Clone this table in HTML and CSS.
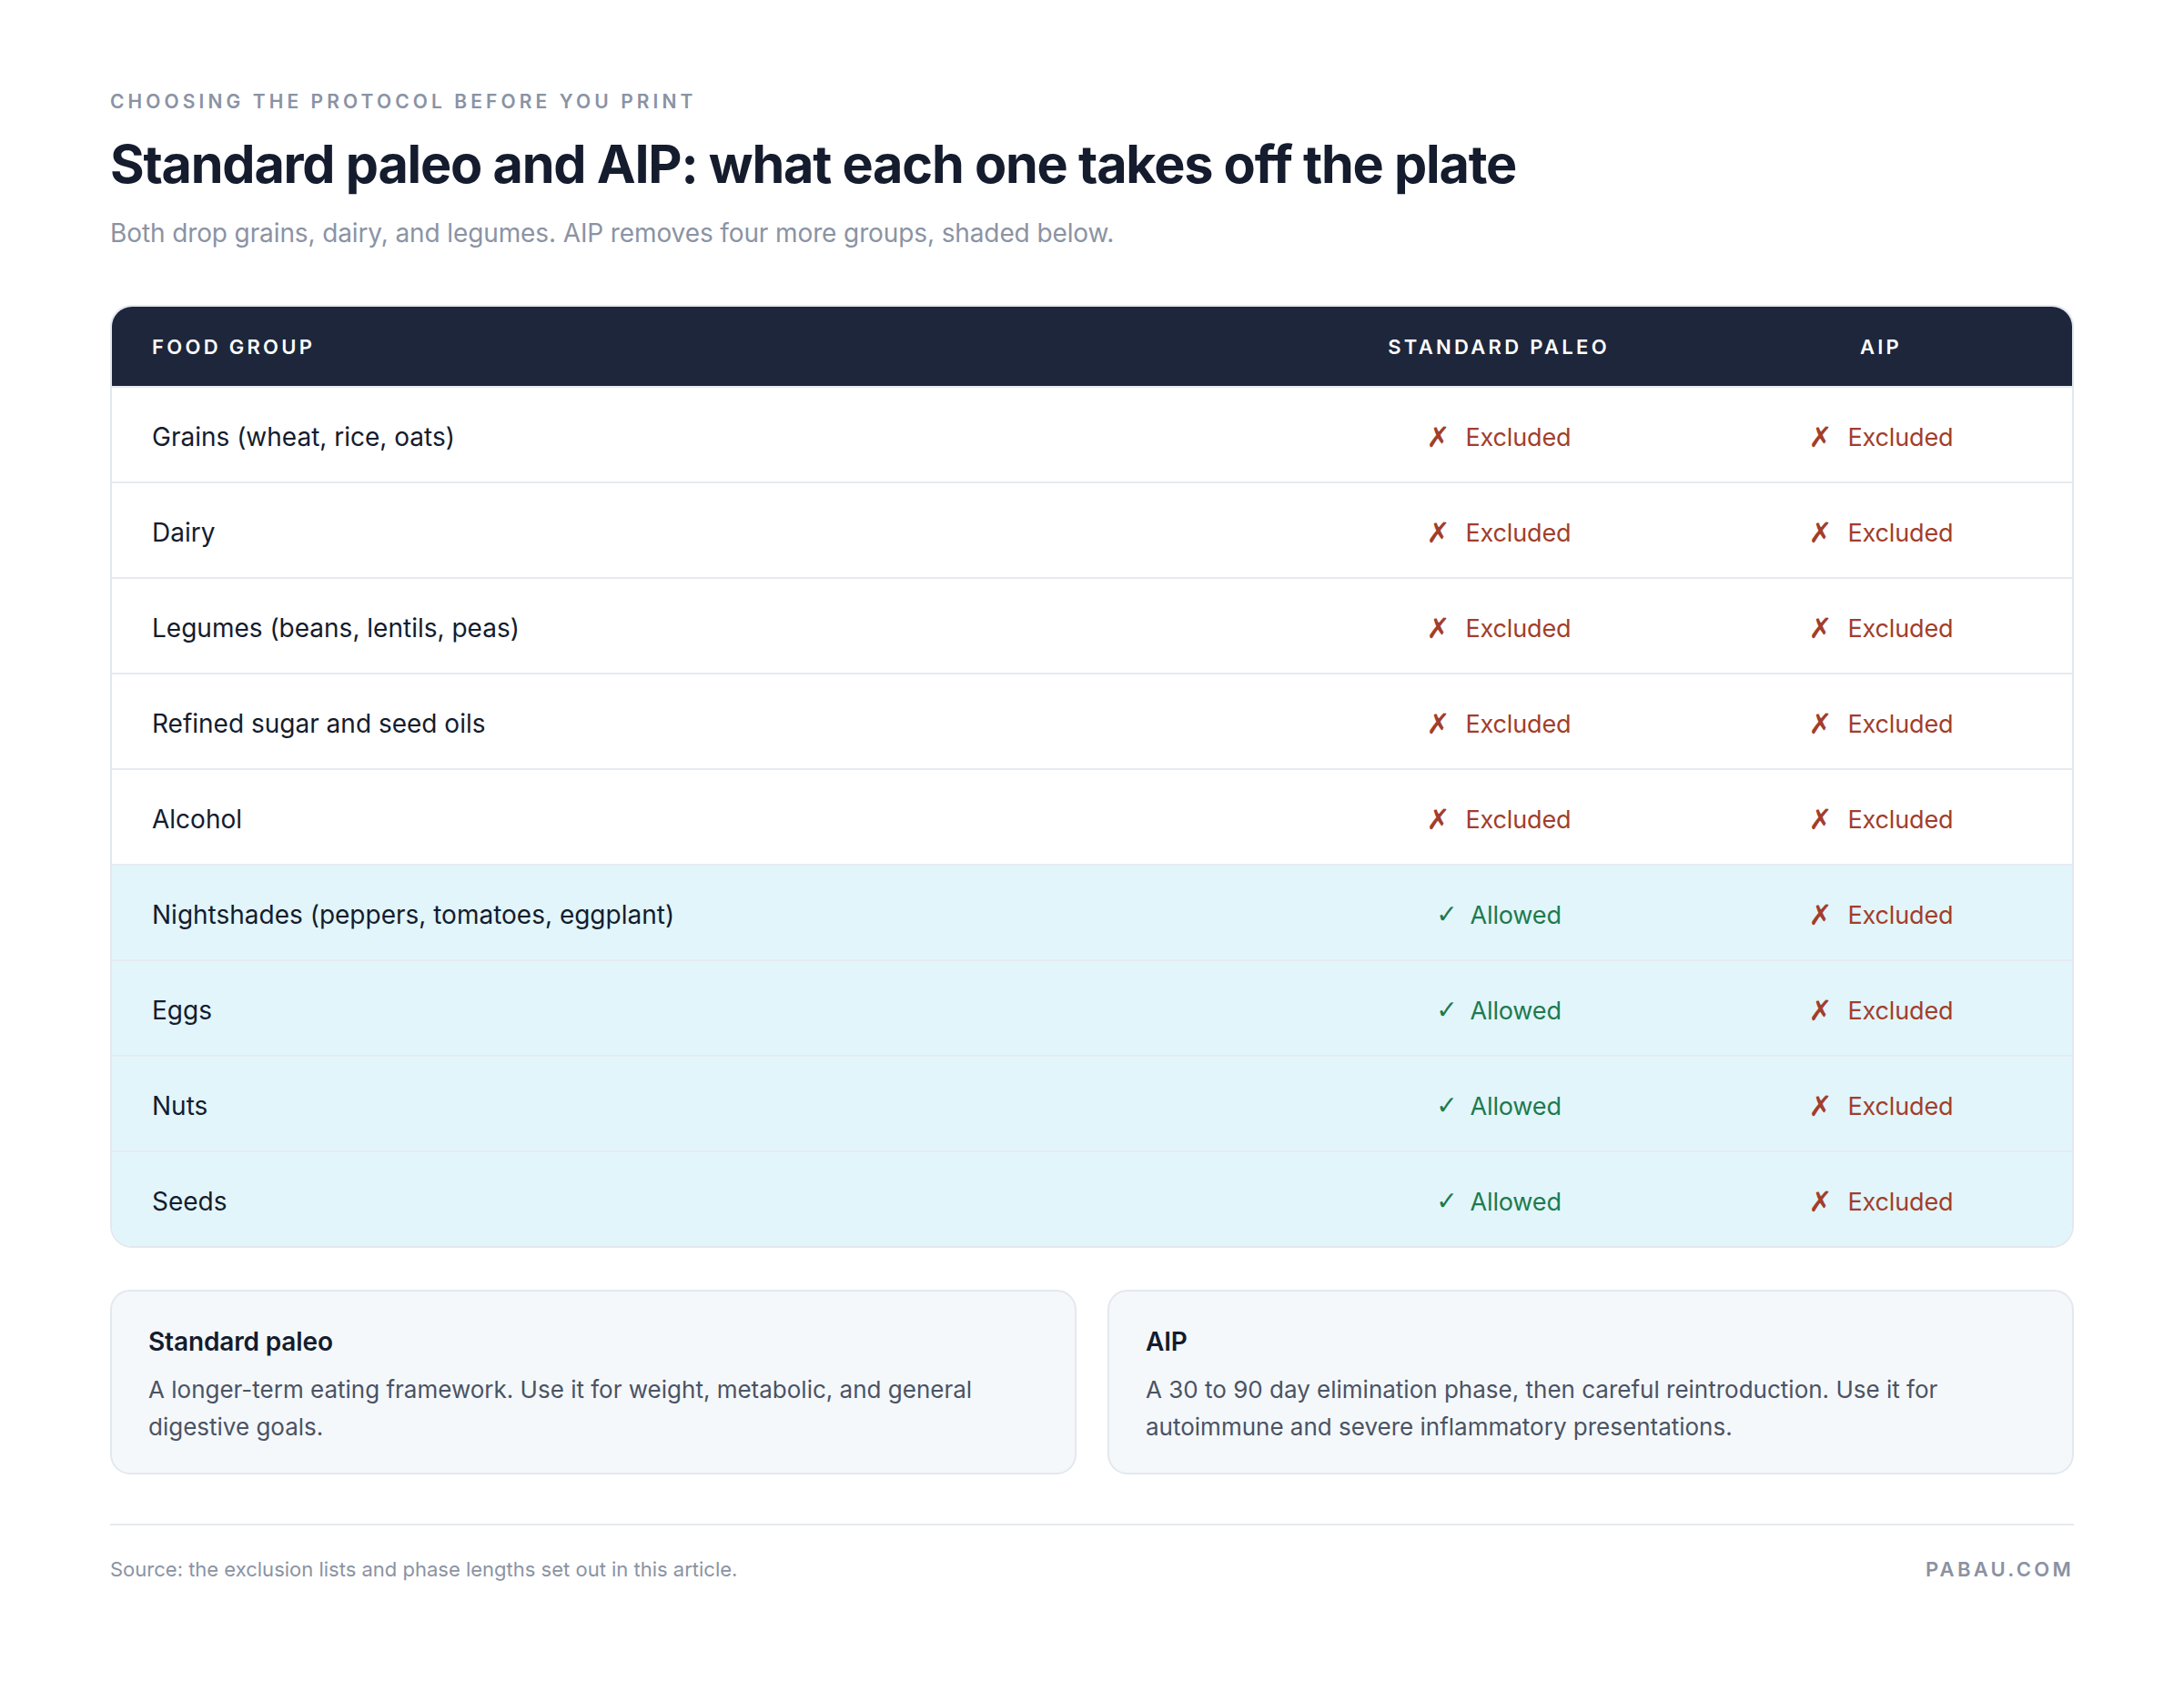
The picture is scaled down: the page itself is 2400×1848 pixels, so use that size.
FILE: index.html
```html
<!DOCTYPE html>
<html lang="en">
<head>
<meta charset="utf-8">
<title>Standard paleo and AIP</title>
<link rel="stylesheet" href="styles.css">
</head>
<body>
<main class="page">
  <header class="intro">
    <p class="eyebrow">Choosing the protocol before you print</p>
    <h1 class="title">Standard paleo and AIP: what each one takes off the plate</h1>
    <p class="subtitle">Both drop grains, dairy, and legumes. AIP removes four more groups, shaded below.</p>
  </header>

  <section class="table">
    <div class="row head">
      <div class="cell label">Food group</div>
      <div class="cell">Standard paleo</div>
      <div class="cell">AIP</div>
    </div>
    <div class="row">
      <div class="cell label">Grains (wheat, rice, oats)</div>
      <div class="cell no"><span class="mark">✗</span>Excluded</div>
      <div class="cell no"><span class="mark">✗</span>Excluded</div>
    </div>
    <div class="row">
      <div class="cell label">Dairy</div>
      <div class="cell no"><span class="mark">✗</span>Excluded</div>
      <div class="cell no"><span class="mark">✗</span>Excluded</div>
    </div>
    <div class="row">
      <div class="cell label">Legumes (beans, lentils, peas)</div>
      <div class="cell no"><span class="mark">✗</span>Excluded</div>
      <div class="cell no"><span class="mark">✗</span>Excluded</div>
    </div>
    <div class="row">
      <div class="cell label">Refined sugar and seed oils</div>
      <div class="cell no"><span class="mark">✗</span>Excluded</div>
      <div class="cell no"><span class="mark">✗</span>Excluded</div>
    </div>
    <div class="row">
      <div class="cell label">Alcohol</div>
      <div class="cell no"><span class="mark">✗</span>Excluded</div>
      <div class="cell no"><span class="mark">✗</span>Excluded</div>
    </div>
    <div class="row shaded">
      <div class="cell label">Nightshades (peppers, tomatoes, eggplant)</div>
      <div class="cell yes"><span class="mark">✓</span>Allowed</div>
      <div class="cell no"><span class="mark">✗</span>Excluded</div>
    </div>
    <div class="row shaded">
      <div class="cell label">Eggs</div>
      <div class="cell yes"><span class="mark">✓</span>Allowed</div>
      <div class="cell no"><span class="mark">✗</span>Excluded</div>
    </div>
    <div class="row shaded">
      <div class="cell label">Nuts</div>
      <div class="cell yes"><span class="mark">✓</span>Allowed</div>
      <div class="cell no"><span class="mark">✗</span>Excluded</div>
    </div>
    <div class="row shaded">
      <div class="cell label">Seeds</div>
      <div class="cell yes"><span class="mark">✓</span>Allowed</div>
      <div class="cell no"><span class="mark">✗</span>Excluded</div>
    </div>
  </section>

  <section class="notes">
    <div class="note">
      <h2 class="note-title">Standard paleo</h2>
      <p class="note-body">A longer-term eating framework. Use it for weight, metabolic, and general digestive goals.</p>
    </div>
    <div class="note">
      <h2 class="note-title">AIP</h2>
      <p class="note-body">A 30 to 90 day elimination phase, then careful reintroduction. Use it for autoimmune and severe inflammatory presentations.</p>
    </div>
  </section>

  <footer class="footer">
    <p class="source">Source: the exclusion lists and phase lengths set out in this article.</p>
    <p class="brand">PABAU.COM</p>
  </footer>
</main>
</body>
</html>
```

FILE: styles.css
```css
* { box-sizing: border-box; }

html, body {
  margin: 0;
  padding: 0;
  background: #ffffff;
}

body {
  font-family: "Inter", "Liberation Sans", sans-serif;
  color: #141c2e;
}

.page {
  width: 2400px;
  padding: 99px 121px 80px 121px;
}

.intro { margin: 0; }

.eyebrow {
  margin: 0;
  font-size: 21px;
  line-height: 25px;
  font-weight: 600;
  letter-spacing: 0.195em;
  text-transform: uppercase;
  color: #8a93a4;
}

.title {
  margin: 23px 0 0 0;
  font-size: 57.5px;
  line-height: 66px;
  font-weight: 700;
  letter-spacing: -0.021em;
  color: #141c2e;
}

.subtitle {
  margin: 24px 0 0 0;
  font-size: 28px;
  line-height: 39px;
  font-weight: 400;
  letter-spacing: -0.004em;
  color: #8b93a3;
}

.table {
  margin-top: 59px;
  border: 2px solid #e3e8ef;
  border-radius: 24px;
  overflow: hidden;
  background: #ffffff;
}

.row {
  display: grid;
  grid-template-columns: 1fr 420px 420px;
  height: 105px;
  align-items: center;
  border-top: 2px solid #e6ebf1;
}

.row.head {
  height: 87px;
  border-top: none;
  background: #1d263b;
  color: #ffffff;
  font-size: 22px;
  font-weight: 600;
  letter-spacing: 0.15em;
  text-transform: uppercase;
}

.row.shaded { background: #e2f5fa; }

.cell {
  display: flex;
  align-items: center;
  justify-content: center;
}

.cell.label {
  justify-content: flex-start;
  padding-left: 44px;
}

.row:not(.head) .cell {
  font-size: 27px;
  letter-spacing: -0.005em;
  padding-top: 5px;
}

.row:not(.head) .cell.label {
  color: #141c2e;
  font-size: 28px;
  letter-spacing: 0;
}

.cell.no { color: #a23e2b; }
.cell.yes { color: #1d7a4e; }

.mark {
  font-family: "DejaVu Sans", sans-serif;
  display: inline-block;
  line-height: 1;
}

.cell.no .mark { font-size: 31px; font-weight: 700; margin-right: 17px; }
.cell.yes .mark { font-size: 28px; font-weight: 400; margin-right: 14px; }

.notes {
  margin-top: 46px;
  display: grid;
  grid-template-columns: 1fr 1fr;
  gap: 34px;
}

.note {
  background: #f4f8fb;
  border: 2px solid #e3e8ef;
  border-radius: 22px;
  padding: 37px 40px 30px 40px;
  height: 203px;
}

.note-title {
  margin: 0;
  font-size: 28px;
  line-height: 36px;
  font-weight: 600;
  letter-spacing: -0.005em;
  color: #141c2e;
}

.note-body {
  margin: 14px 0 0 0;
  font-size: 26px;
  line-height: 41px;
  font-weight: 400;
  letter-spacing: 0;
  color: #4b5364;
}

.footer {
  margin-top: 54px;
  border-top: 2px solid #e5e9ef;
  padding-top: 34px;
  display: flex;
  justify-content: space-between;
  align-items: baseline;
}

.source {
  margin: 0;
  font-size: 22px;
  line-height: 28px;
  color: #8b93a3;
}

.brand {
  margin: 0;
  font-size: 22px;
  line-height: 28px;
  font-weight: 600;
  letter-spacing: 0.15em;
  color: #8a92a3;
}
```
